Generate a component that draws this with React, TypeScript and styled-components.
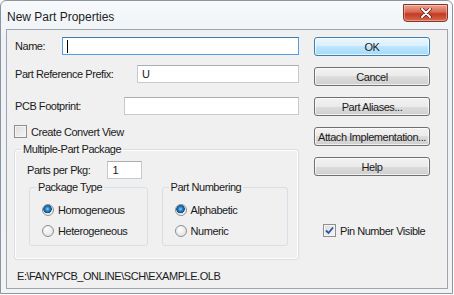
import styled, { createGlobalStyle } from "styled-components";

const GlobalStyle = createGlobalStyle`
  body {
    margin: 0;
    background: #ffffff;
    font-family: "Liberation Sans", Arial, sans-serif;
  }
`;

type LabeledInputProps = {
  label: string;
  labelWidth: number;
  value?: string;
  focused?: boolean;
};

function LabeledInput({ label, labelWidth, value, focused }: LabeledInputProps) {
  return (
    <FieldRow>
      <FieldLabel $w={labelWidth}>{label}</FieldLabel>
      <TextBox $focused={focused}>
        {focused && <Caret />}
        {value}
      </TextBox>
    </FieldRow>
  );
}

function Check({ label, checked }: { label: string; checked?: boolean }) {
  return (
    <CheckRow>
      <CheckBox>
        {checked && (
          <svg width="9" height="9" viewBox="0 0 9 9">
            <path d="M1 4.5 L3.5 7 L8 1.5" fill="none" stroke="#2a54a8" strokeWidth="1.8" />
          </svg>
        )}
      </CheckBox>
      <span>{label}</span>
    </CheckRow>
  );
}

function Radio({ label, checked }: { label: string; checked?: boolean }) {
  return (
    <RadioRow>
      <RadioDot $checked={checked} />
      <span>{label}</span>
    </RadioRow>
  );
}

export default function App() {
  return (
    <>
      <GlobalStyle />
      <Window>
        <TitleBar>
          <Title>New Part Properties</Title>
          <CloseButton>
            <svg width="12" height="10" viewBox="0 0 12 10">
              <path d="M2 1 L10 9 M10 1 L2 9" stroke="#5a1a12" strokeWidth="3.4" strokeLinecap="round" />
              <path d="M2 1 L10 9 M10 1 L2 9" stroke="#ffffff" strokeWidth="2" strokeLinecap="round" />
            </svg>
          </CloseButton>
        </TitleBar>
        <Client>
          <LeftColumn>
            <LabeledInput label="Name:" labelWidth={47} focused />
            <LabeledInput label="Part Reference Prefix:" labelWidth={122} value="U" />
            <LabeledInput label="PCB Footprint:" labelWidth={109} />
            <Check label="Create Convert View" />
            <OuterGroup>
              <Legend>Multiple-Part Package</Legend>
              <PartsRow>
                <span>Parts per Pkg:</span>
                <SmallBox>1</SmallBox>
              </PartsRow>
              <SubGroups>
                <InnerGroup $w={119}>
                  <Legend>Package Type</Legend>
                  <Radio label="Homogeneous" checked />
                  <Radio label="Heterogeneous" />
                </InnerGroup>
                <InnerGroup $w={127}>
                  <Legend>Part Numbering</Legend>
                  <Radio label="Alphabetic" checked />
                  <Radio label="Numeric" />
                </InnerGroup>
              </SubGroups>
            </OuterGroup>
            <PathText>E:\FANYPCB_ONLINE\SCH\EXAMPLE.OLB</PathText>
          </LeftColumn>
          <RightColumn>
            <Button $primary>OK</Button>
            <Button>Cancel</Button>
            <Button>Part Aliases...</Button>
            <Button>Attach Implementation...</Button>
            <Button>Help</Button>
            <PinCheck>
              <Check label="Pin Number Visible" checked />
            </PinCheck>
          </RightColumn>
        </Client>
      </Window>
    </>
  );
}

const Window = styled.div`
  width: 453px;
  height: 294px;
  box-sizing: border-box;
  border: 1px solid #8c959f;
  border-radius: 6px 6px 0 0;
  background: linear-gradient(#f7f9fb, #eef2f6 40px, #f1f3f5);
  display: flex;
  flex-direction: column;
  padding: 0 4px 4px 5px;
`;

const TitleBar = styled.div`
  height: 28px;
  display: flex;
  align-items: flex-start;
  justify-content: space-between;
`;

const Title = styled.div`
  font-size: 12px;
  color: #1e1e1e;
  margin-top: 9px;
  margin-left: 1px;
`;

const CloseButton = styled.div`
  width: 43px;
  height: 16px;
  margin-top: 3px;
  border: 1px solid #8a3428;
  border-radius: 0 0 4px 4px;
  background: linear-gradient(#e8a593, #d9654f 45%, #c43a22 55%, #d56a4d);
  display: flex;
  align-items: center;
  justify-content: center;
  box-shadow: inset 0 0 0 1px rgba(255, 255, 255, 0.35);
`;

const Client = styled.div`
  flex: 1;
  display: flex;
  background: #f0f0f0;
  border: 1px solid #9da5ad;
  font-size: 11px;
  letter-spacing: -0.45px;
  color: #1a1a1a;
`;

const LeftColumn = styled.div`
  width: 285px;
  margin-left: 7px;
  padding-top: 7px;
  display: flex;
  flex-direction: column;
`;

const FieldRow = styled.div`
  display: flex;
  align-items: center;
  height: 18px;
  margin-bottom: 10px;
  &:nth-child(2) {
    margin-bottom: 14px;
  }
`;

const FieldLabel = styled.span<{ $w: number }>`
  width: ${({ $w }) => $w}px;
  padding-left: 1px;
  flex-shrink: 0;
`;

const TextBox = styled.div<{ $focused?: boolean }>`
  flex: 1;
  height: 18px;
  box-sizing: border-box;
  background: #fff;
  border: 1px solid ${({ $focused }) => ($focused ? "#569de5" : "#c5cad0")};
  border-top-color: ${({ $focused }) => ($focused ? "#3d7bad" : "#abadb3")};
  display: flex;
  align-items: center;
  padding-left: 4px;
  font-size: 11px;
`;

const Caret = styled.span`
  width: 1px;
  height: 13px;
  background: #000;
`;

const CheckRow = styled.div`
  display: flex;
  align-items: center;
  gap: 4px;
  height: 13px;
`;

const CheckBox = styled.span`
  width: 13px;
  height: 13px;
  box-sizing: border-box;
  border: 1px solid #8e8f8f;
  background: linear-gradient(135deg, #dcdcdc, #f6f6f6);
  box-shadow: inset 0 0 0 1px #f4f4f4;
  display: flex;
  align-items: center;
  justify-content: center;
`;

const OuterGroup = styled.fieldset`
  margin: 5px 0 0 0;
  padding: 0 10px 9px 12px;
  border: 1px solid #d5dfe5;
  border-radius: 3px;
  box-shadow: inset 0 0 0 1px #fff;
  min-width: 0;
  height: 117px;
  box-sizing: border-box;
`;

const Legend = styled.legend`
  padding: 0 2px;
  margin-left: -6px;
  line-height: 12px;
`;

const PartsRow = styled.div`
  display: flex;
  align-items: center;
  height: 18px;
  margin-top: 6px;
`;

const SmallBox = styled.div`
  width: 35px;
  height: 18px;
  box-sizing: border-box;
  margin-left: 17px;
  background: #fff;
  border: 1px solid #c5cad0;
  border-top-color: #abadb3;
  padding-left: 4px;
  display: flex;
  align-items: center;
`;

const SubGroups = styled.div`
  display: flex;
  gap: 14px;
  margin-left: 2px;
  margin-top: 2px;
`;

const InnerGroup = styled.fieldset<{ $w: number }>`
  width: ${({ $w }) => $w}px;
  box-sizing: border-box;
  margin: 0;
  padding: 10px 0 8px 12px;
  border: 1px solid #d5dfe5;
  border-radius: 3px;
  min-width: 0;
  display: flex;
  flex-direction: column;
  gap: 8px;
`;

const RadioRow = styled.div`
  display: flex;
  align-items: center;
  gap: 4px;
  height: 13px;
`;

const RadioDot = styled.span<{ $checked?: boolean }>`
  width: 12px;
  height: 12px;
  box-sizing: border-box;
  border-radius: 50%;
  border: 1px solid #8e8f8f;
  background: ${({ $checked }) =>
    $checked
      ? "radial-gradient(circle at 45% 40%, #8fd3f7 0, #2a86c9 2px, #0d4f8c 4px, #e2e2e2 4.5px, #f4f4f4 6px)"
      : "radial-gradient(circle at 40% 35%, #ffffff, #dadada)"};
`;

const PathText = styled.div`
  margin-top: 10px;
  padding-left: 3px;
  line-height: 12px;
`;

const RightColumn = styled.div`
  width: 116px;
  margin-left: 15px;
  padding-top: 7px;
  display: flex;
  flex-direction: column;
  gap: 11px;
`;

const Button = styled.div<{ $primary?: boolean }>`
  height: 19px;
  box-sizing: border-box;
  border: 1px solid ${({ $primary }) => ($primary ? "#3c7fb1" : "#707070")};
  border-radius: 3px;
  background: ${({ $primary }) =>
    $primary
      ? "linear-gradient(#eaf6fd, #d9f0fc 50%, #bee6fd 50%, #a7d9f5)"
      : "linear-gradient(#f2f2f2, #ebebeb 50%, #dddddd 50%, #cfcfcf)"};
  box-shadow: inset 0 0 0 1px rgba(255, 255, 255, 0.7);
  display: flex;
  align-items: center;
  justify-content: center;
  white-space: nowrap;
`;

const PinCheck = styled.div`
  margin-top: 37px;
  padding-left: 9px;
`;
